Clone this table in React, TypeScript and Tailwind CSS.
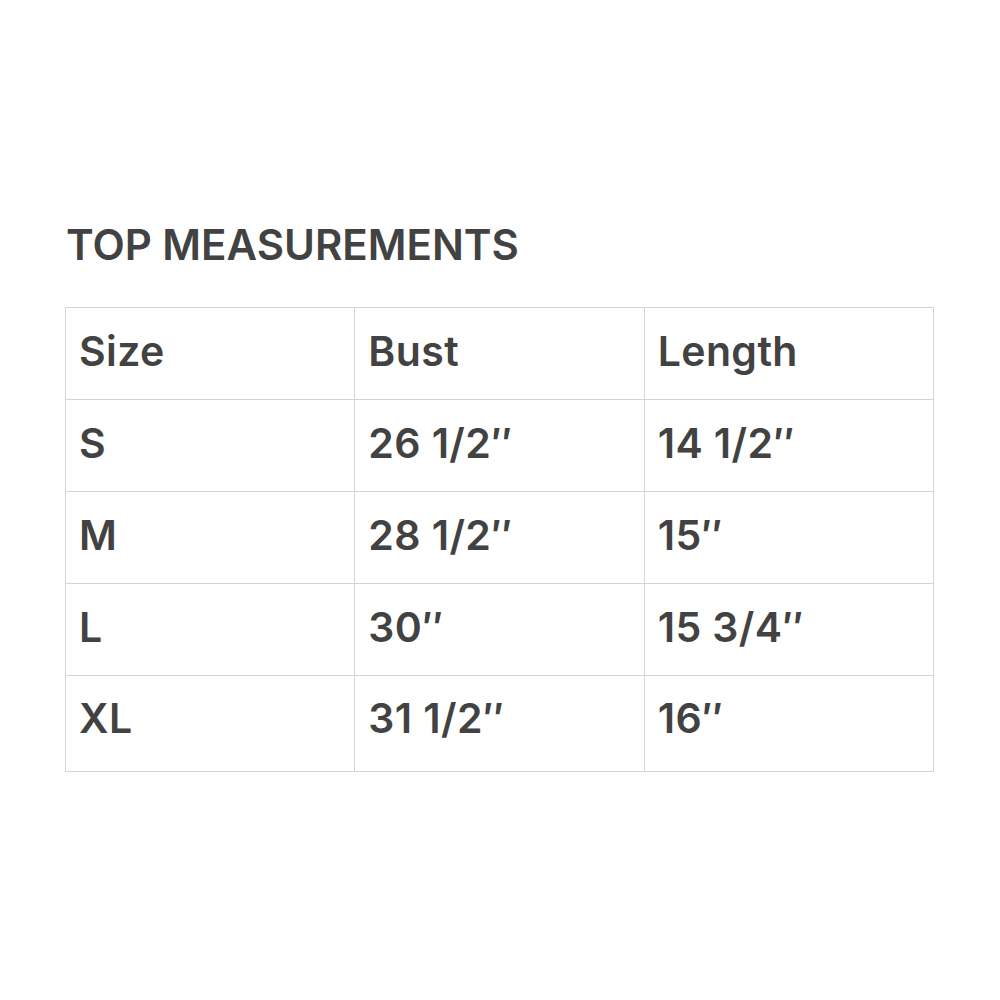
const rows = [
  ["Size", "Bust", "Length"],
  ["S", "26 1/2″", "14 1/2″"],
  ["M", "28 1/2″", "15″"],
  ["L", "30″", "15 3/4″"],
  ["XL", "31 1/2″", "16″"],
];

const App = () => {
  return (
    <div
      className="w-[1000px] h-[1000px] bg-white text-[#424242] pt-[221px] pl-[65px]"
      style={{ fontFamily: "Inter, 'Noto Sans', sans-serif" }}
    >
      <h1 className="text-[42px] font-semibold leading-[48px] pl-[1px] tracking-[0px]">
        TOP MEASUREMENTS
      </h1>
      <table className="mt-[38px] w-[869px] border-collapse table-fixed">
        <tbody>
          {rows.map((row, i) => (
            <tr key={i} className={i === rows.length - 1 ? "h-[96px]" : "h-[92px]"}>
              {row.map((cell, j) => (
                <td
                  key={j}
                  className={`border border-[#d4d4d4] pl-[13px] align-middle text-[41px] font-semibold leading-none tracking-[0.4px] ${
                    i === rows.length - 1 ? "pb-[10px]" : "pb-[5px]"
                  }`}
                >
                  {cell}
                </td>
              ))}
            </tr>
          ))}
        </tbody>
      </table>
    </div>
  );
};

export default App;
